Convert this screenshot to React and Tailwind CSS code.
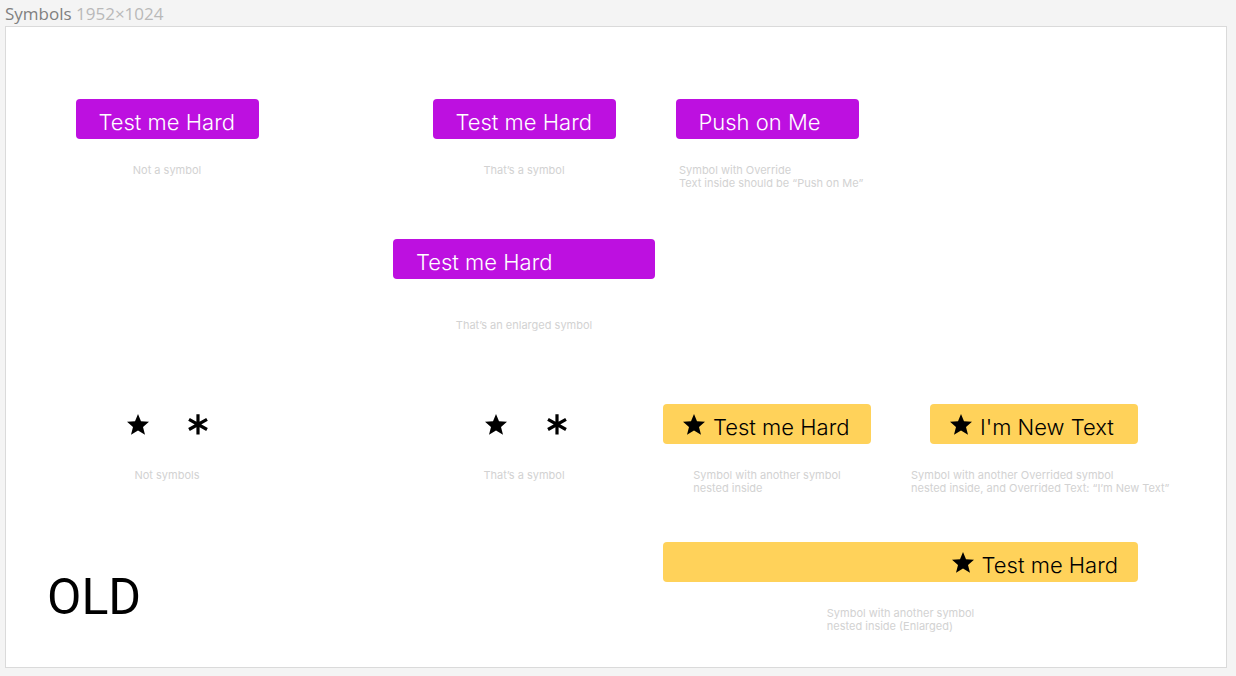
import React from "react";

function Star() {
  return (
    <svg viewBox="0 0 22 21" className="h-[21px] w-[22px] shrink-0" fill="#000" aria-hidden="true">
      <path d="M11 0 L14 7.2 L22 7.8 L16 13 L18 20.8 L11 16.6 L4 20.8 L6 13 L0 7.8 L8 7.2 Z" />
    </svg>
  );
}

function Asterisk() {
  return (
    <svg viewBox="0 0 20 21" className="h-[21px] w-5 shrink-0" stroke="#000" strokeWidth="3.2" fill="none" aria-hidden="true">
      <path d="M10 0.3 V20.4 M1 5.3 L19 15.5 M19 5.3 L1 15.5" />
    </svg>
  );
}

function PurpleButton({ children, width = "w-[183px]" }) {
  return (
    <button type="button" className={`h-10 ${width} rounded bg-[#bd10e0] pt-1.5 pl-[23px] text-left text-[22px] leading-6 font-light whitespace-nowrap text-white`}>
      {children}
    </button>
  );
}

function YellowButton({ children, align = "justify-start" }) {
  return (
    <button type="button" className={`flex h-10 w-full items-center gap-2 rounded bg-[#ffd25a] px-5 text-[22px] leading-6 font-light whitespace-nowrap text-black ${align}`}>
      <Star />
      <span className="pt-1.5">{children}</span>
    </button>
  );
}

function Cell({ place, gap = "gap-[25px]", captionWidth = "w-auto", caption, children }) {
  return (
    <figure className={`flex flex-col items-center ${gap} ${place}`}>
      {children}
      <figcaption className={`text-[11px] leading-[13px] whitespace-nowrap text-[#d2d2d2] ${captionWidth}`}>
        {caption.map((line) => (
          <span key={line} className="block">{line}</span>
        ))}
      </figcaption>
    </figure>
  );
}

const row =
  "grid grid-cols-[minmax(0,322fr)_minmax(0,65fr)_minmax(0,262fr)_minmax(0,8fr)_minmax(0,208fr)_minmax(0,59fr)_minmax(0,208fr)_minmax(0,88fr)]";

export default function App() {
  return (
    <main className="min-h-screen bg-[#f4f4f4] pr-[9px] pb-2 pl-[5px] font-['Inter',sans-serif]">
      <h1 className="h-[26px] font-['Open_Sans',sans-serif] text-[17px] leading-7 font-normal text-[#808080]">
        Symbols <span className="text-[#b9b9b9]">1952×1024</span>
      </h1>
      <section className="border border-[#dadada] bg-white pt-[72px] pb-[34px]">
        <div className={row}>
          <Cell place="col-start-1" caption={["Not a symbol"]}>
            <PurpleButton>Test me Hard</PurpleButton>
          </Cell>
          <Cell place="col-start-3" caption={["That’s a symbol"]}>
            <PurpleButton>Test me Hard</PurpleButton>
          </Cell>
          <Cell place="col-start-5" captionWidth="w-44" caption={["Symbol with Override", "Text inside should be “Push on Me”"]}>
            <PurpleButton>Push on Me</PurpleButton>
          </Cell>
        </div>
        <div className={`${row} mt-[49px]`}>
          <Cell place="col-start-3" gap="gap-10" caption={["That’s an enlarged symbol"]}>
            <PurpleButton width="w-full">Test me Hard</PurpleButton>
          </Cell>
        </div>
        <div className={`${row} mt-[72px]`}>
          <Cell place="col-start-1" caption={["Not symbols"]}>
            <div className="flex h-10 items-center gap-[39px]">
              <Star />
              <Asterisk />
            </div>
          </Cell>
          <Cell place="col-start-3" caption={["That’s a symbol"]}>
            <div className="flex h-10 items-center gap-10 pl-1">
              <Star />
              <Asterisk />
            </div>
          </Cell>
          <Cell place="col-start-5" caption={["Symbol with another symbol", "nested inside"]}>
            <YellowButton>Test me Hard</YellowButton>
          </Cell>
          <Cell place="col-start-7" captionWidth="w-[246px]" caption={["Symbol with another Overrided symbol", "nested inside, and Overrided Text: “I’m New Text”"]}>
            <YellowButton>I'm New Text</YellowButton>
          </Cell>
        </div>
        <div className={`${row} mt-[47px]`}>
          <h2 className="col-start-1 pt-[25px] pl-[41px] font-['Roboto',sans-serif] text-[50px] leading-[60px] font-normal text-black">
            OLD
          </h2>
          <Cell place="col-start-5 col-span-3" caption={["Symbol with another symbol", "nested inside (Enlarged)"]}>
            <YellowButton align="justify-end">Test me Hard</YellowButton>
          </Cell>
        </div>
      </section>
    </main>
  );
}
